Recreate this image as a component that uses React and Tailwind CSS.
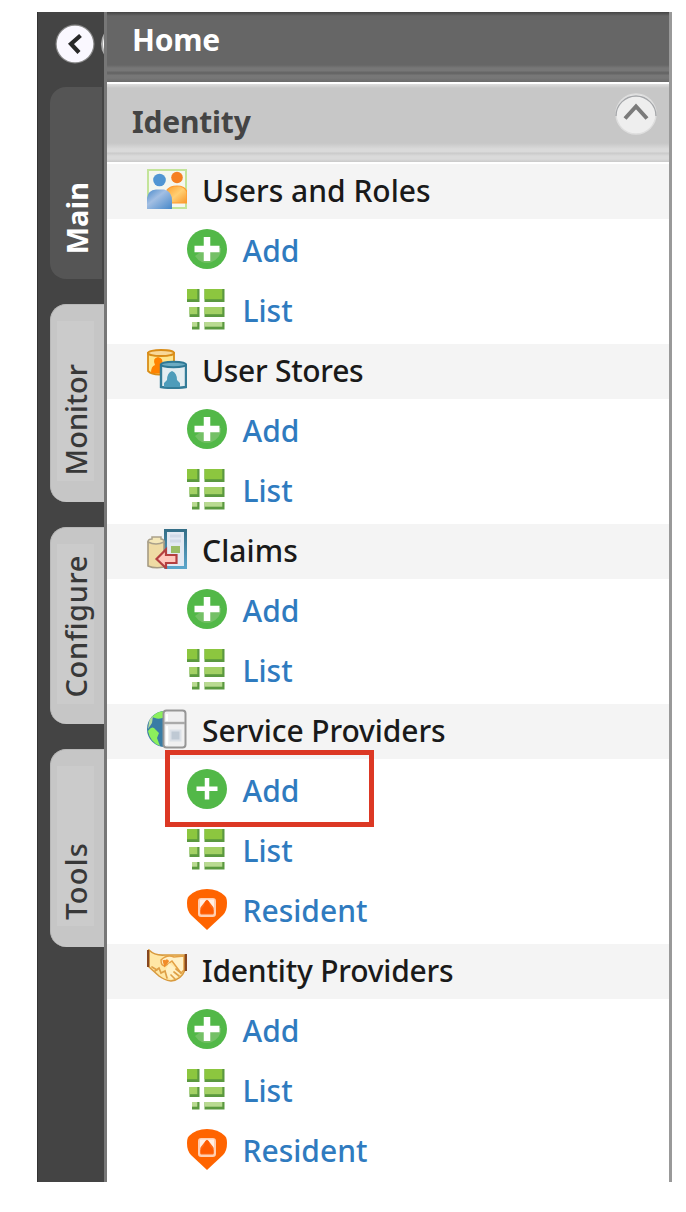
import React from "react";

function UsersIcon() {
  return (
    <svg width="40" height="40" viewBox="0 0 40 40">
      <defs>
        <linearGradient id="ub" x1="0" y1="0" x2="1" y2="1"><stop offset="0" stopColor="#4a8acb" /><stop offset=".4" stopColor="#a3bfe3" /><stop offset="1" stopColor="#4587c9" /></linearGradient>
        <linearGradient id="uo" x1="0" y1="0" x2="1" y2="1"><stop offset="0" stopColor="#ffa02c" /><stop offset=".5" stopColor="#ffcf73" /><stop offset="1" stopColor="#f8962a" /></linearGradient>
      </defs>
      <rect x="1" y="1" width="38" height="38" fill="#f4f7ef" stroke="#c3e49a" strokeWidth="2" />
      <circle cx="30" cy="8.5" r="5.8" fill="#f57f20" />
      <path d="M20 21 Q23 17 30 17 Q38 17 40 23 V34 H23Z" fill="url(#uo)" stroke="#ff9b2e" strokeWidth="1.2" />
      <circle cx="12.5" cy="11" r="6.3" fill="#5096d3" />
      <path d="M0 40 V29 Q1 21 9 20.5 H17 Q25 22 25 32 V40Z" fill="url(#ub)" />
    </svg>
  );
}

function StoresIcon() {
  return (
    <svg width="40" height="40" viewBox="0 0 40 40">
      <path d="M1 4 V22 Q5 26 14 25.5 Q24 25 27 22 V4Z" fill="#ffe58d" stroke="#d98d18" strokeWidth="1.8" />
      <path d="M4 24 Q4 17 8 16 Q5 9 11 8 Q17 9 15 16 Q18 17 18 25Z" fill="#ff8200" />
      <ellipse cx="14" cy="4" rx="13" ry="3" fill="#f8d899" stroke="#d98d18" strokeWidth="1.8" />
      <path d="M14 16 V38 Q26 40 39 38 V16Z" fill="#e4edf1" stroke="#347c98" strokeWidth="2.4" />
      <path d="M17 38 V34 L20 31 Q20 24 25 22 Q30 24 30 31 L33 34 V38Z" fill="#4e9cba" />
      <ellipse cx="26.5" cy="15.5" rx="12.5" ry="2.8" fill="#6cabc2" stroke="#2f7895" strokeWidth="2" />
    </svg>
  );
}

function ClaimsIcon() {
  return (
    <svg width="40" height="40" viewBox="0 0 40 40">
      <defs><linearGradient id="cb" x2="0" y2="1"><stop stopColor="#356f88" /><stop offset="1" stopColor="#5ba5ca" /></linearGradient></defs>
      <rect x="18.5" y="1.5" width="20" height="37" fill="#e3e9f2" stroke="url(#cb)" strokeWidth="3" />
      <path d="M23 7H34M23 12H34" stroke="#d2dae7" strokeWidth="3" />
      <rect x="24" y="17" width="9" height="7" fill="#9bbd66" />
      <path d="M1 13 V37 Q8 40 17 38 V13Z" fill="#efdba4" stroke="#a69b83" strokeWidth="1.6" />
      <path d="M1 13Q1 10 5 10V8H14V10Q17 10 17 13Q9 17 1 13Z" fill="#f4e7b8" stroke="#aaa18b" strokeWidth="1.5" />
      <path d="M9.5 30 L19 20.5 V26 H29.5 V34 H19 V39Z" fill="#ffc8bd" stroke="#b43f40" strokeWidth="2.2" />
    </svg>
  );
}

function ServiceIcon() {
  return (
    <svg width="40" height="40" viewBox="0 0 40 40">
      <path d="M18 2 A18 18 0 0 0 18 38Z" fill="#397ca5" />
      <path d="M5 8 Q10 2 18 2 V8 Q12 11 8 9Z M1 22 Q4 17 7 19 L12 24 L10 29 L13 37 Q3 33 1 22Z" fill="#8cf05c" />
      <path d="M2 13Q3 9 6 7L5 14L1 20Z" fill="#b5dd9e" />
      <rect x="16.5" y="1.5" width="22" height="37" rx="3" fill="#f0f0f1" stroke="#969696" strokeWidth="2" />
      <path d="M17 14H38" stroke="#aaa" strokeWidth="2.4" />
      <path d="M20 5V12M20 17V36" stroke="#fff" strokeWidth="2" />
      <rect x="23.5" y="21.5" width="10" height="10" fill="#bfc9d4" stroke="#dce1e8" strokeWidth="2" />
    </svg>
  );
}

function HandshakeIcon() {
  return (
    <svg width="40" height="40" viewBox="0 0 40 40">
      <path d="M2 1 Q8 7 18 6 L37 6 L38 21 Q34 31 24 32 Q17 31 12 27 L2 18Z" fill="#ffe7a5" stroke="#d89a3e" strokeWidth="1.6" />
      <path d="M14 11 Q20 5 27 8 L37 7 V21 L34 24 L25 12 L18 17 Q14 17 14 11Z" fill="#fff1c8" stroke="#e4a044" strokeWidth="1.5" />
      <path d="M17 11 L18 15 L21 11" fill="none" stroke="#f28c28" strokeWidth="3" />
      <path d="M22 14 L33 23 Q31 30 24 30 Q19 28 18 23Z" fill="#fff0c3" />
      <path d="M5 18L10 21M8 22L12 19L14 24L18 22L20 29M24 26L28 30M27 23L32 27M29 20L34 24" fill="none" stroke="#dea047" strokeWidth="1.7" strokeLinecap="round" />
      <path d="M1 1V18M38.8 5V22" stroke="#86471f" strokeWidth="2.4" />
    </svg>
  );
}

function AddIcon({ flat }) {
  return (
    <svg width="40" height="40" viewBox="0 0 40 40">
      <circle cx="20" cy="20" r="20" fill="#52b848" />
      {!flat && <path d="M34 19 A14 14 0 0 1 8 27 Q18 19 34 19Z" fill="#74c066" />}
      {flat ? <path d="M20 9V30.5M9.5 19.7H30.5" stroke="#fff" strokeWidth="4.5" /> : <path d="M20 8V32M7.5 20H32.5" stroke="#fff" strokeWidth="6.5" />}
    </svg>
  );
}

function Block({ x, y, w, h, fill }) {
  return (
    <g>
      <rect x={x} y={y} width={w} height={h} fill="#5b993f" />
      <rect x={x} y={y} width={w - 2.2} height={h - 2.8} fill={fill} />
    </g>
  );
}

function ListIcon() {
  return (
    <svg width="40" height="41" viewBox="0 0 40 41">
      <Block x={0} y={0} w={12.5} h={13} fill="#8cc63f" />
      <Block x={17.5} y={0} w={20} h={13} fill="#8cc63f" />
      <Block x={2.5} y={18} w={10} h={10} fill="#a4d165" />
      <Block x={17.5} y={18} w={20} h={10} fill="#a4d165" />
      <Block x={5} y={33} w={7.5} h={7.5} fill="#b9da91" />
      <Block x={17.5} y={33} w={20} h={7.5} fill="#b9da91" />
    </svg>
  );
}

function ResidentIcon() {
  return (
    <svg width="40" height="41" viewBox="0 0 40 41">
      <path d="M20 0 Q31 0 38 7 Q40 9 40 14 Q40 22 36 26 L20 41 L4 26 Q0 22 0 14 Q0 9 2 7 Q9 0 20 0Z" fill="#ff6400" />
      <rect x="12.2" y="10.2" width="15.6" height="16.6" rx="2" fill="#ff6b18" stroke="#ffcfb3" strokeWidth="2.4" />
      <path d="M13 10.5H27V19L20 10L13 19Z" fill="#fff0e6" />
      <path d="M13.5 24.5V21L17 17Q18 11 20 11Q22 11 23 17L26.5 21V24.5Z" fill="#ff5b00" />
    </svg>
  );
}

const groups = [
  { title: "Users and Roles", Icon: UsersIcon, items: ["Add", "List"], spacing: "tracking-[0px]" },
  { title: "User Stores", Icon: StoresIcon, items: ["Add", "List"], spacing: "tracking-[-0.3px]" },
  { title: "Claims", Icon: ClaimsIcon, items: ["Add", "List"], spacing: "tracking-[0.1px]" },
  { title: "Service Providers", Icon: ServiceIcon, items: ["Add", "List", "Resident"], marked: true, spacing: "tracking-[-0.1px]" },
  { title: "Identity Providers", Icon: HandshakeIcon, items: ["Add", "List", "Resident"], spacing: "tracking-[-0.2px]" },
];

function MenuItem({ name, marked }) {
  return (
    <li className="relative flex h-[60px] items-start pl-20">
      {marked && <span className="absolute -top-[19px] left-[58px] h-[77px] w-[209px] border-[5px] border-[#dc3824]" />}
      <span className="h-[41px] w-10 shrink-0">
        {name === "Add" && <AddIcon flat={marked} />}
        {name === "List" && <ListIcon />}
        {name === "Resident" && <ResidentIcon />}
      </span>
      <a className="ml-[15.5px] text-[30px] leading-[44px] font-medium text-[#2f7bbf]">{name}</a>
    </li>
  );
}

function Group({ group }) {
  const { title, Icon, items, marked, spacing } = group;
  return (
    <section>
      <h3 className="flex h-[55px] items-start bg-[#f4f4f4] pt-[5px] pl-10 font-medium text-[#1a1a1a]">
        <Icon />
        <span className={`ml-[15px] text-[30px] leading-[44px] ${spacing}`}>{title}</span>
      </h3>
      <ul className="-mb-[5px] pt-[10px]">
        {items.map((name) => <MenuItem key={name} name={name} marked={marked && name === "Add"} />)}
      </ul>
    </section>
  );
}

function Tab({ label, active, textClass }) {
  return active ? (
    <div className="flex h-48 w-[52px] items-end justify-center rounded-l-2xl bg-[#555] pb-[25px]">
      <span className={`rotate-180 font-bold text-white [writing-mode:vertical-rl] ${textClass}`}>{label}</span>
    </div>
  ) : (
    <div className="h-[197.5px] w-[55px] rounded-l-2xl border-t border-l border-[#b8b8b8] bg-[#c6c6c6] pt-4 pl-[6px]">
      <div className="flex h-40 w-[37px] items-end justify-center bg-[#cbcbcb]">
        <span className={`rotate-180 font-medium text-[#383838] [writing-mode:vertical-rl] ${textClass}`}>{label}</span>
      </div>
    </div>
  );
}

export default function App() {
  return (
    <div className="h-[1212px] w-[686px] overflow-hidden bg-white pt-3 pl-[37px] font-['Noto_Sans',sans-serif]">
      <div className="flex h-[1170px] w-[635px]">
        <aside className="flex w-[70px] shrink-0 flex-col overflow-hidden border-r-[3px] border-l border-r-[#777] border-l-[#333] bg-[#444] pl-3">
          <div className="flex h-[75px] shrink-0 items-start gap-[7px] pt-3 pl-[5px]">
            <svg className="shrink-0" width="40" height="40" viewBox="0 0 40 40">
              <circle cx="20" cy="20" r="19.5" fill="#888" />
              <circle cx="20" cy="20" r="18.3" fill="#faf8ff" />
              <path d="M25.5 11.5L16 20L24 28.5" fill="none" stroke="#282828" strokeWidth="4.2" />
            </svg>
            <span className="-ml-px h-10 w-10 shrink-0 rounded-full border-2 border-[#aaa] bg-white" />
          </div>
          <div className="flex flex-col gap-[25px]">
            <Tab label="Main" active textClass="text-[29px] leading-[37px]" />
            <Tab label="Monitor" textClass="mb-[6px] text-[29px] leading-[37px]" />
            <Tab label="Configure" textClass="mb-[6px] text-[29px] leading-[37px] tracking-[0.6px]" />
            <Tab label="Tools" textClass="mb-[6px] text-[29px] leading-[37px] tracking-[1.2px]" />
          </div>
        </aside>
        <main className="w-[562px] shrink-0">
          <header className="h-[70px] bg-[linear-gradient(to_bottom,#444_0px,#555_2px,#666_4px,#666_53px,#777_56px,#777_59px,#666_60px,#666_62px,#777_63px,#777_66px,#6a6a6a_70px)] pl-[25px]">
            <h1 className="text-[30px] leading-[55px] font-bold tracking-[-0.2px] text-white">Home</h1>
          </header>
          <header className="flex h-20 justify-between bg-[linear-gradient(to_bottom,#fff_0px,#fff_2px,#ddd_2px,#c7c7c7_6px,#c7c7c7_61px,#dadada_67px,#dadada_70px,#c9c9c9_71px,#dadada_74px,#dadada_77px,#c9c9c9_80px)] pl-[25px]">
            <h2 className="text-[30px] leading-[80px] font-bold tracking-[-0.2px] text-[#444]">Identity</h2>
            <svg className="mt-[10px] mr-[12px]" width="42" height="43" viewBox="0 0 42 43">
              <circle cx="21" cy="22" r="20" fill="#eee" stroke="#dedede" strokeWidth="1.4" />
              <path d="M1 24A20 20 0 1 1 41 24" fill="none" stroke="#a5a7aa" strokeWidth="1.3" />
              <path d="M10 26.5L21 14.5L32 26.5" fill="none" stroke="#7b7b7b" strokeWidth="4" />
            </svg>
          </header>
          <nav className="bg-white pt-[2px]">
            {groups.map((group) => <Group key={group.title} group={group} />)}
          </nav>
        </main>
        <div className="w-[3px] shrink-0 bg-[#999]" />
      </div>
    </div>
  );
}
